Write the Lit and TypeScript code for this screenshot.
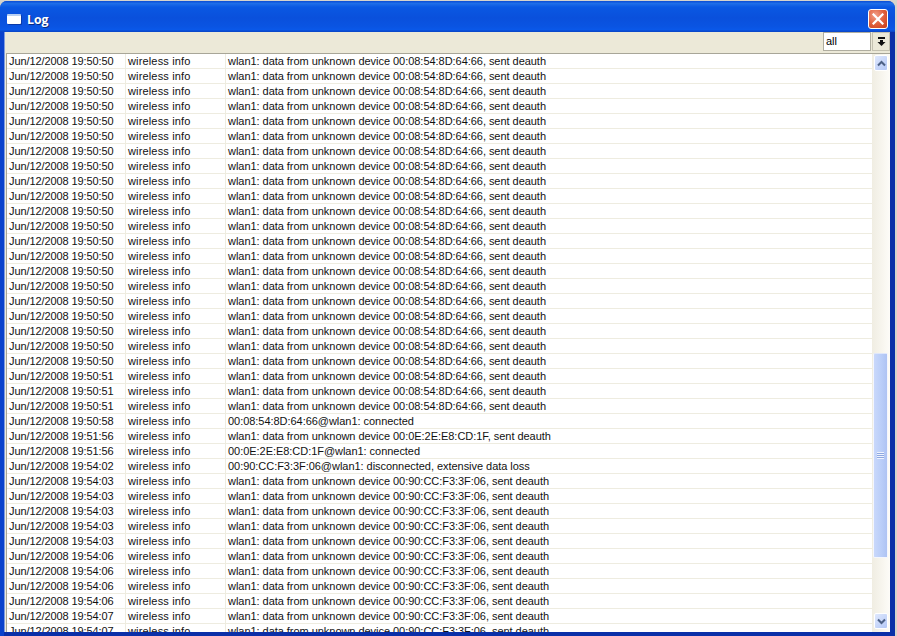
import { LitElement, html, css, svg } from "lit";
import { customElement } from "lit/decorators.js";

type Row = [string, string];
const D1 = "wlan1: data from unknown device 00:08:54:8D:64:66, sent deauth";
const D2 = "wlan1: data from unknown device 00:90:CC:F3:3F:06, sent deauth";
const rep = (n: number, t: string, m: string): Row[] => Array.from({ length: n }, () => [t, m] as Row);
const rows: Row[] = [
  ...rep(21, "19:50:50", D1),
  ...rep(3, "19:50:51", D1),
  ["19:50:58", "00:08:54:8D:64:66@wlan1: connected"],
  ["19:51:56", "wlan1: data from unknown device 00:0E:2E:E8:CD:1F, sent deauth"],
  ["19:51:56", "00:0E:2E:E8:CD:1F@wlan1: connected"],
  ["19:54:02", "00:90:CC:F3:3F:06@wlan1: disconnected, extensive data loss"],
  ...rep(5, "19:54:03", D2),
  ...rep(4, "19:54:06", D2),
  ...rep(2, "19:54:07", D2),
];

@customElement("app-root")
export class AppRoot extends LitElement {
  static styles = css`
    :host {
      display: block;
      width: 897px;
      height: 636px;
      background: #d6d4cc;
      overflow: hidden;
      font-family: "Liberation Sans", Arial, sans-serif;
    }
    .window {
      width: 895px;
      height: 635px;
      margin-top: 1px;
      box-sizing: border-box;
      display: flex;
      flex-direction: column;
      border-radius: 7px 7px 0 0;
      background: #0a42cc;
      padding-bottom: 4px;
    }
    .title {
      height: 31px;
      box-sizing: border-box;
      flex: none;
      display: flex;
      align-items: center;
      padding: 4px 7px 0 7px;
      gap: 6px;
      border-radius: 7px 7px 0 0;
      background: linear-gradient(180deg, #0a4cd4 0%, #1e6ee8 8%, #0a58e2 20%, #0a50dc 55%, #0a54e2 82%, #0a58e8 92%, #0a44c4 100%);
    }
    .win-icon {
      width: 14px;
      height: 10px;
      flex: none;
      background: #fff;
      border-top: 2px solid #b9d0f2;
      box-sizing: border-box;
      border-radius: 1px;
      box-shadow: 1px 1px 0 #0a3aa8;
    }
    .log {
      color: #fff;
      font: bold 13px "Open Sans", "Liberation Sans", sans-serif;
      text-shadow: 1px 1px 0 #0a2a80;
      flex: 1;
      transform: scaleX(0.95);
      transform-origin: left center;
    }
    .close {
      width: 20px;
      height: 20px;
      box-sizing: border-box;
      border: 1px solid #fff;
      border-radius: 3px;
      background: radial-gradient(circle at 35% 30%, #f2a08a 0%, #e0613e 50%, #c83c18 100%);
      display: flex;
      align-items: center;
      justify-content: center;
      margin-top: 1px;
    }
    .close svg { display: block; }
    .body {
      flex: 1;
      min-height: 0;
      margin: 0 5px 0 4px;
      border-left: 1px solid #7f9ce0;
      display: flex;
      flex-direction: column;
      background: #ece9d8;
      box-shadow: 5px 0 0 #0a2fa8, 0 4px 0 #0a2fa8, 5px 4px 0 #0a2fa8;
    }
    .toolbar {
      height: 21px;
      flex: none;
      display: flex;
      justify-content: flex-end;
      align-items: flex-start;
      gap: 1px;
    }
    .select {
      width: 48px;
      height: 19px;
      box-sizing: border-box;
      background: #fff;
      border: 1px solid #b0aea0;
      font-size: 11px;
      line-height: 17px;
      padding-left: 2px;
      color: #000;
    }
    .drop {
      width: 18px;
      height: 19px;
      box-sizing: border-box;
      border: 1px solid #c4c1b0;
      background: #ece9d8;
      display: flex;
      align-items: center;
      justify-content: center;
    }
    .content {
      flex: 1;
      min-height: 0;
      margin-left: 1px;
      display: flex;
      border-top: 1px solid #a8a698;
      border-left: 1px solid #a8a698;
      background: #fff;
    }
    .list {
      flex: 1;
      min-width: 0;
      overflow: hidden;
    }
    .row {
      height: 15px;
      box-sizing: border-box;
      border-bottom: 1px solid #eeece0;
      display: grid;
      grid-template-columns: 119px 100px 1fr;
      font-size: 11px;
      line-height: 14px;
      color: #111;
      white-space: nowrap;
    }
    .row span { padding-left: 2px; border-right: 1px solid #eeece0; }
    .row .date { letter-spacing: -0.1px; }
    .row .topic { letter-spacing: 0.15px; }
    .row .msg { letter-spacing: -0.04px; border-right: none; }
    .scroll {
      width: 18px;
      flex: none;
      display: flex;
      flex-direction: column;
      background: linear-gradient(90deg, #f0ede2, #fdfcf8);
    }
    .btn {
      height: 16px;
      width: 14px;
      margin-left: 2px;
      flex: none;
      box-sizing: border-box;
      border: 1px solid #fff;
      border-radius: 2px;
      background: linear-gradient(135deg, #dfe8fd, #b4c8f6);
      display: flex;
      align-items: center;
      justify-content: center;
    }
    .up { margin-top: 1px; }
    .down { margin-bottom: 3px; }
    .track {
      flex: 1;
      min-height: 0;
    }
    .thumb {
      height: 205px;
      width: 15px;
      margin: 282px 0 0 1px;
      box-sizing: border-box;
      border: 1px solid #f4f6fd;
      border-top-color: #dfe7fb;
      border-radius: 2px;
      background: linear-gradient(90deg, #c9d8fb, #b9cdf8 60%, #aec3f3);
      display: flex;
      align-items: center;
      justify-content: center;
    }
    .grip { width: 7px; height: 7px; background: repeating-linear-gradient(180deg, #eef3fe 0 1px, #8ea8e0 1px 2px); }
  `;

  render() {
    const chevron = (d: string) => svg`<path d=${d} fill="none" stroke="#4d6185" stroke-width="2"/>`;
    return html`
      <div class="window">
        <div class="title">
          <div class="win-icon"></div>
          <div class="log">Log</div>
          <div class="close">
            <svg width="12" height="12" viewBox="0 0 12 12"><path d="M1.5 1.5l9 9M10.5 1.5l-9 9" stroke="#fff" stroke-width="2.2" stroke-linecap="square"/></svg>
          </div>
        </div>
        <div class="body">
          <div class="toolbar">
            <div class="select">all</div>
            <div class="drop">
              <svg width="9" height="9" viewBox="0 0 9 9"><path d="M1 0h7v2H1zM3 3h3v2h2.5L4.5 9 .5 5H3z" fill="#111"/></svg>
            </div>
          </div>
          <div class="content">
            <div class="list">
              ${rows.map(
                ([t, m]) => html`<div class="row"><span class="date">Jun/12/2008 ${t}</span><span class="topic">wireless info</span><span class="msg">${m}</span></div>`
              )}
            </div>
            <div class="scroll">
              <div class="btn up"><svg width="9" height="7" viewBox="0 0 9 7">${chevron("M1 5.5l3.5-3.5 3.5 3.5")}</svg></div>
              <div class="track"><div class="thumb"><div class="grip"></div></div></div>
              <div class="btn down"><svg width="9" height="7" viewBox="0 0 9 7">${chevron("M1 1.5l3.5 3.5 3.5-3.5")}</svg></div>
            </div>
          </div>
        </div>
      </div>
    `;
  }
}
